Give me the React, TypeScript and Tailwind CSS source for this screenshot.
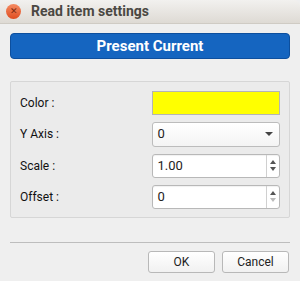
const font = { fontFamily: '"Roboto", "Liberation Sans", sans-serif' };

function SpinBox({ value, upOnly }: { value: string; upOnly?: boolean }) {
  return (
    <div className="flex h-[24px] w-[128px] rounded-[3px] border border-[#b8b8b8] bg-white shadow-[inset_0_1px_1px_rgba(0,0,0,0.06)]">
      <div className="flex flex-1 items-center pl-[4px] text-[13px] text-[#222]">{value}</div>
      <div className="flex w-[13px] flex-col items-center justify-center gap-[3px] border-l border-[#d0d0d0]">
        <span className="h-0 w-0 border-x-[3.5px] border-b-[4px] border-x-transparent border-b-[#555]" />
        <span
          className={
            upOnly
              ? "h-0 w-0 border-x-[3.5px] border-t-[4px] border-x-transparent border-t-[#bbb]"
              : "h-0 w-0 border-x-[3.5px] border-t-[4px] border-x-transparent border-t-[#555]"
          }
        />
      </div>
    </div>
  );
}

export default function App() {
  return (
    <div style={font} className="h-[281px] w-[300px] overflow-hidden bg-[#efefef]">
      {/* title bar */}
      <div className="flex h-[24px] items-center rounded-t-[6px] border-b border-[#cfcbc4] bg-gradient-to-b from-[#f2f1ef] to-[#dedad4] pl-[6px]">
        <div className="flex h-[15px] w-[15px] items-center justify-center rounded-full bg-gradient-to-b from-[#f58a60] to-[#de4c1e] text-[9px] leading-none text-[#7a2a10]">
          ✕
        </div>
        <span className="ml-[10px] text-[14px] font-bold text-[#4b4843]">Read item settings</span>
      </div>

      <div className="px-[10px]">
        <button className="mt-[9px] flex h-[26px] w-full items-center justify-center rounded-[4px] border border-[#0d4f9e] bg-[#1565c0] text-[15px] font-bold text-white">
          Present Current
        </button>

        <div className="mt-[22px] flex h-[137px] flex-col justify-center gap-[7px] rounded-[2px] border border-[#d6d6d6] bg-[#ebebeb] pl-[9px] pr-[9px]">
          <div className="flex items-center">
            <span className="w-[133px] text-[12px] text-[#111]">Color :</span>
            <div className="h-[24px] w-[128px] border border-[#b4b4b4] bg-[#ffff00]" />
          </div>
          <div className="flex items-center">
            <span className="w-[133px] text-[12px] text-[#111]">Y Axis :</span>
            <div className="flex h-[25px] w-[128px] items-center justify-between rounded-[3px] border border-[#bcbcbc] bg-gradient-to-b from-white to-[#f4f4f4] pl-[4px] pr-[6px] text-[13px] text-[#222]">
              0
              <span className="h-0 w-0 border-x-[4px] border-t-[4px] border-x-transparent border-t-[#444]" />
            </div>
          </div>
          <div className="flex items-center">
            <span className="w-[133px] text-[12px] text-[#111]">Scale :</span>
            <SpinBox value="1.00" />
          </div>
          <div className="flex items-center">
            <span className="w-[133px] text-[12px] text-[#111]">Offset :</span>
            <SpinBox value="0" upOnly />
          </div>
        </div>

        <div className="mt-[24px] h-0 border-t border-[#bdbdbd]" />

        <div className="mt-[8px] flex justify-end gap-[7px] pr-[1px]">
          <button className="h-[22px] w-[67px] rounded-[3px] border border-[#b8b8b8] bg-gradient-to-b from-white to-[#f1f1f1] text-[12px] text-[#222]">
            OK
          </button>
          <button className="h-[22px] w-[67px] rounded-[3px] border border-[#b8b8b8] bg-gradient-to-b from-white to-[#f1f1f1] text-[12px] text-[#222]">
            Cancel
          </button>
        </div>
      </div>
    </div>
  );
}
